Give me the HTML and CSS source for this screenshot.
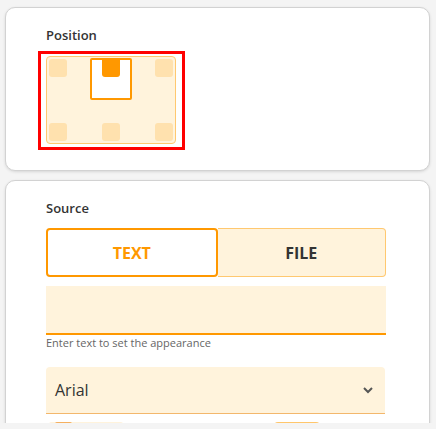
FILE: index.html
```html
<!DOCTYPE html>
<html lang="en">
<head>
  <meta charset="UTF-8">
  <title>Appearance</title>
  <link rel="stylesheet" href="styles.css">
</head>
<body>

  <div class="viewport">

    <!-- Position picker -->
    <section class="card">
      <h3 class="label">Position</h3>
      <div class="highlight">
        <div class="picker">
          <span class="cell"></span>
          <span class="cell selected">
            <span class="frame"></span>
            <span class="dot"></span>
          </span>
          <span class="cell"></span>
          <span class="cell"></span>
          <span class="cell"></span>
          <span class="cell"></span>
        </div>
      </div>
    </section>

    <!-- Source -->
    <section class="card">
      <h3 class="label">Source</h3>
      <div class="tabs">
        <button class="tab active">TEXT</button>
        <button class="tab">FILE</button>
      </div>
      <div class="field">
        <input type="text" aria-label="Text">
      </div>
      <p class="hint">Enter text to set the appearance</p>
      <div class="select">
        <span>Arial</span>
        <svg width="10" height="7" viewBox="0 0 10 7">
          <path d="M1 1 L5 5 L9 1" fill="none" stroke="#555" stroke-width="2"/>
        </svg>
      </div>
      <div class="more">
        <div class="swatch"><span class="swatch-fill"></span></div>
        <div class="chip"></div>
      </div>
    </section>

  </div>

</body>
</html>
```

FILE: styles.css
```css
body {
  font-family: 'Open Sans', 'Noto Sans', sans-serif;
  background-color: #f4f4f4;
  margin: 0;
  color: #333;
}

.viewport {
  height: 423px;
  overflow: hidden;
  padding: 7px 0 0 5px;
  box-sizing: border-box;
  display: flex;
  flex-direction: column;
  gap: 9px;
}

.card {
  width: 425px;
  box-sizing: border-box;
  background: #ffffff;
  border: 1px solid #d2d2d2;
  border-radius: 10px;
  box-shadow: 0 1px 3px rgba(0, 0, 0, 0.12);
  padding: 18px 40px 20px 40px;
  flex-shrink: 0;
}

.label {
  margin: 0;
  font-size: 13px;
  line-height: 18px;
  font-weight: 600;
  color: #333;
}

/* position picker */
.highlight {
  margin: 7px 0 0 -8px;
  width: fit-content;
  border: 3px solid #ff0000;
  padding: 2px 6px 3px 5px;
}

.picker {
  width: 130px;
  height: 88px;
  box-sizing: border-box;
  background: #fff3dc;
  border: 1px solid #ffc870;
  border-radius: 4px;
  padding: 2px;
  display: grid;
  grid-template-columns: 18px 18px 18px;
  grid-template-rows: 18px 18px;
  justify-content: space-between;
  align-content: space-between;
}

.cell {
  background: #ffe1ae;
  border-radius: 3px;
  position: relative;
}

.cell.selected {
  background: transparent;
}

.frame {
  position: absolute;
  left: -12px;
  top: -1px;
  width: 42px;
  height: 42px;
  box-sizing: border-box;
  border: 2px solid #ff9800;
  border-radius: 2px;
  background: #ffffff;
}

.dot {
  position: absolute;
  left: 0;
  top: 0;
  width: 18px;
  height: 18px;
  background: #ff9800;
  border-radius: 0 0 3px 3px;
}

/* source tabs */
.tabs {
  display: flex;
  margin-top: 11px;
  width: 340px;
}

.tab {
  flex: 1;
  height: 49px;
  font-family: inherit;
  font-size: 16px;
  font-weight: 700;
  cursor: pointer;
  background: #fff3dc;
  color: #333;
  border: 1px solid #ffc870;
  border-left: none;
  border-radius: 0 4px 4px 0;
}

.tab.active {
  background: #ffffff;
  color: #ff9800;
  border: 2px solid #ff9800;
  border-radius: 4px;
}

.field {
  margin-top: 9px;
  width: 340px;
  height: 49px;
  box-sizing: border-box;
  background: #fff3dc;
  border-bottom: 2px solid #ff9800;
}

.field input {
  width: 100%;
  height: 100%;
  box-sizing: border-box;
  border: none;
  background: transparent;
  outline: none;
  padding: 0 10px;
  font-family: inherit;
  font-size: 15px;
}

.hint {
  margin: 0;
  font-size: 11px;
  line-height: 15px;
  color: #666;
}

.select {
  margin-top: 17px;
  width: 339px;
  height: 47px;
  box-sizing: border-box;
  background: #fff3dc;
  border-bottom: 1px solid #f3b76c;
  border-radius: 4px 4px 0 0;
  padding: 0 12px 0 9px;
  display: flex;
  align-items: center;
  justify-content: space-between;
  font-size: 16px;
  color: #333;
}

.more {
  margin-top: 8px;
  display: flex;
  justify-content: space-between;
  width: 272px;
  padding-left: 2px;
}

.swatch {
  width: 76px;
  height: 30px;
  background: #fff3dc;
  border-radius: 4px 4px 0 0;
  padding-left: 7px;
  box-sizing: border-box;
}

.swatch-fill {
  display: block;
  width: 17px;
  height: 30px;
  background: #f5b060;
  border-radius: 2px 2px 0 0;
}

.chip {
  width: 46px;
  height: 30px;
  background: #ffc66b;
  border-radius: 4px 4px 0 0;
}
```
